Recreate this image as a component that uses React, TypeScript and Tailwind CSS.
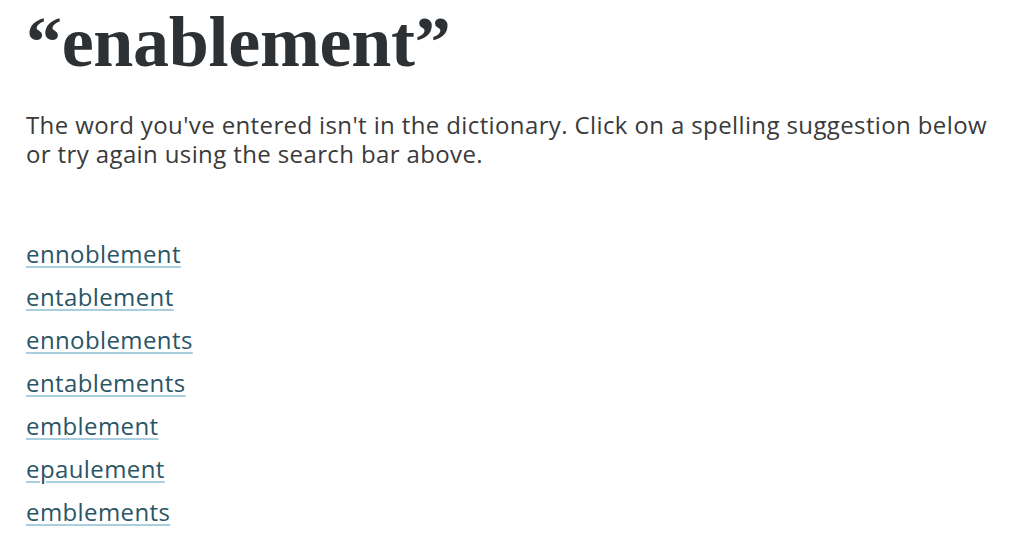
import React from 'react';

const suggestions = [
  'ennoblement',
  'entablement',
  'ennoblements',
  'entablements',
  'emblement',
  'epaulement',
  'emblements',
];

export default function App() {
  return (
    <div className="min-h-screen bg-white pl-[26px] pr-[8px] pt-0 text-[#333]">
      <h1 className="m-0 text-[72px] font-bold leading-[84px] text-[#2d3134] tracking-[-0.3px] [font-family:'Liberation_Serif',serif]">
        “enablement”
      </h1>
      <p className="mt-[26px] max-w-[975px] text-[24px] leading-[29px] tracking-[0.38px] text-[#3a3a3a] [font-family:'Open_Sans',sans-serif]">
        The word you've entered isn't in the dictionary. Click on a spelling suggestion below or try again using the search bar above.
      </p>
      <ul className="mt-[70px] flex flex-col gap-[12px] [font-family:'Open_Sans',sans-serif]">
        {suggestions.map((s) => (
          <li key={s} className="text-[24px] leading-[31px] tracking-[0.4px]">
            <a
              href="#"
              className="text-[#2a5566] underline decoration-[#a9cfdf] decoration-2 underline-offset-[3px]"
            >
              {s}
            </a>
          </li>
        ))}
      </ul>
    </div>
  );
}
